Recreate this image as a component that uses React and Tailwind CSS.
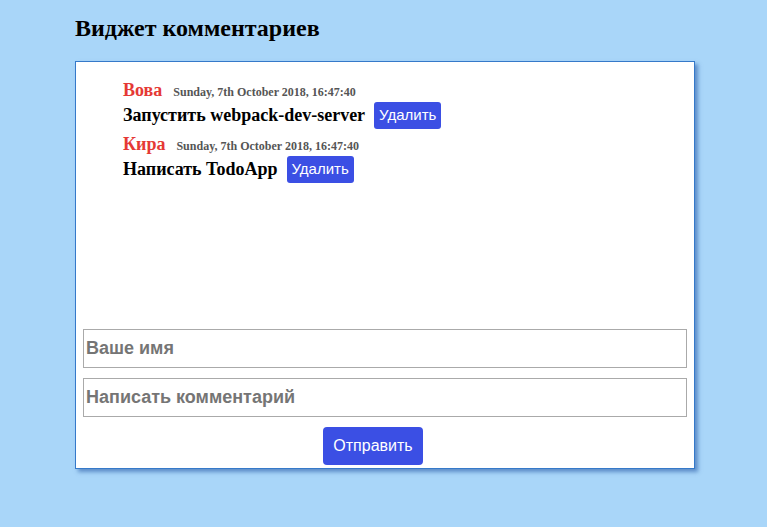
import React from 'react';

const comments = [
  { name: 'Вова', date: 'Sunday, 7th October 2018, 16:47:40', text: 'Запустить webpack-dev-server' },
  { name: 'Кира', date: 'Sunday, 7th October 2018, 16:47:40', text: 'Написать TodoApp' },
];

export default function App() {
  return (
    <div className="min-h-[527px] bg-[#a9d6f9] pl-[75px] pt-[14px] font-['Liberation_Serif',serif]">
      <h1 className="text-[24px] font-bold text-black leading-[28px]">Виджет комментариев</h1>

      <div className="mt-[19px] w-[620px] border border-[#3579c9] bg-white shadow-[3px_3px_4px_rgba(30,80,160,0.55)]">
        {/* Comment list */}
        <ul className="h-[267px] pl-[47px] pt-[18px]">
          {comments.map((c, i) => (
            <li key={i} className="mb-[5px]">
              <div className="flex items-baseline gap-[11px]">
                <span className="text-[18px] font-bold text-[#e53935] leading-[21px]">{c.name}</span>
                <span className="text-[12px] font-bold text-[#555]">{c.date}</span>
              </div>
              <div className="mt-[1px] flex items-center gap-[9px]">
                <span className="text-[18px] font-bold text-black">{c.text}</span>
                <button className="h-[27px] rounded-[3px] bg-[#3b4fe4] px-[5px] font-['Liberation_Sans',Arial,sans-serif] text-[15px] text-white">
                  Удалить
                </button>
              </div>
            </li>
          ))}
        </ul>

        {/* Form */}
        <div className="flex flex-col gap-[10px] px-[7px] pb-[3px]">
          <input
            placeholder="Ваше имя"
            className="h-[39px] w-full border border-[#aaa] px-[2px] font-['Liberation_Sans',Arial,sans-serif] text-[18px] font-bold placeholder:text-[#757575] outline-none"
          />
          <input
            placeholder="Написать комментарий"
            className="h-[39px] w-full border border-[#aaa] px-[2px] font-['Liberation_Sans',Arial,sans-serif] text-[18px] font-bold placeholder:text-[#757575] outline-none"
          />
          <div className="pl-[240px]">
            <button className="h-[38px] w-[100px] rounded-[4px] bg-[#3b4fe4] font-['Liberation_Sans',Arial,sans-serif] text-[16px] text-white">
              Отправить
            </button>
          </div>
        </div>
      </div>
    </div>
  );
}
